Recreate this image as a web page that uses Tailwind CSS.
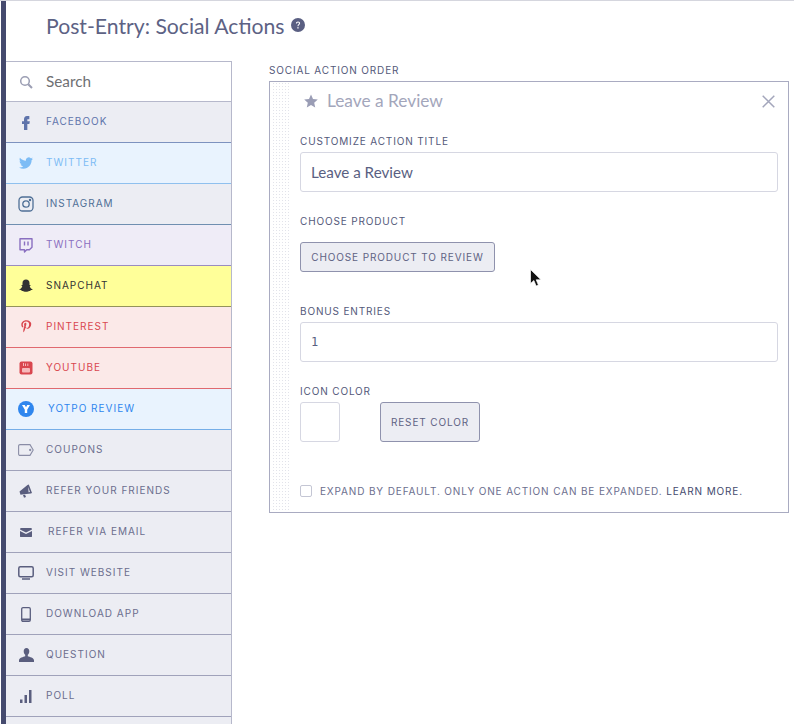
<!DOCTYPE html>
<html lang="en">

<head>
    <meta charset="UTF-8">
    <title>Post-Entry: Social Actions</title>
    <script src="https://cdn.jsdelivr.net/npm/@tailwindcss/browser@4"></script>
</head>

<body class="bg-white font-['Inter',sans-serif]">
    <div class="relative h-[724px] w-[794px] overflow-hidden border-t border-[#d5d6de]">
        <div class="ml-px flex h-full border-l-[5px] border-[#454a6e]">
            <div class="flex-1">
                <!-- header -->
                <div class="flex h-[60px] items-start pl-10 pt-[13px]">
                    <h1 class="font-['Lato',sans-serif] text-[21.2px] leading-[24px] text-[#5d6284]">Post-Entry: Social Actions</h1>
                    <svg class="ml-[6px] mt-[4px] h-[14px] w-[14px]" viewBox="0 0 14 14">
                        <circle cx="7" cy="7" r="7" fill="#5a5f82" />
                        <path d="M4.900 5.400C5 4.200 5.900 3.500 7 3.500c1.200 0 2.100.7 2.100 1.800 0 1.600-1.700 1.600-1.700 3H6.500c0-2 1.500-2 1.500-3 0-.5-.4-.9-1-.9s-1 .4-1.100 1z" fill="#fff" />
                        <rect x="6.300" y="9.200" width="1.300" height="1.300" fill="#fff" />
                    </svg>
                </div>

                <div class="flex">
                    <!-- sidebar -->
                    <div class="w-[226px] shrink-0 border-r border-[#b6b8cb]">
                        <div class="flex h-[41px] items-center border-y border-[#b6b8cb] bg-white">
                            <svg class="ml-[13px] h-[14px] w-[14px]" viewBox="0 0 14 14" fill="none" stroke="#9b9eb3" stroke-width="1.500">
                                <circle cx="6" cy="6" r="4.300" />
                                <path d="M9.200 9.200L13 13" stroke-width="2" />
                            </svg>
                            <span class="ml-[13px] font-['Lato',sans-serif] text-[15.3px] text-[#6f7073]">Search</span>
                        </div>

                        <div class="flex h-[41px] items-center border-b border-[#7d92bf] bg-[#ecedf3] text-[#5f74ab]">
                            <span class="flex w-10 justify-center">
                                <svg class="h-4 w-4" viewBox="0 0 24 24" fill="currentColor"><path d="M14 8h3V3h-3.500C10.400 3 9 5 9 8v3H6v4h3v9h5v-9h3l.8-4H14V8.800C14 8.300 14.200 8 14 8z" /></svg>
                            </span>
                            <span class="pb-0.5 text-[10px] tracking-[1px]">FACEBOOK</span>
                        </div>
                        <div class="flex h-[41px] items-center border-b border-[#8fc0ee] bg-[#e9f3fe] text-[#7dbcf5]">
                            <span class="flex w-10 justify-center">
                                <svg class="h-[14px] w-[14px]" viewBox="0 0 24 24" fill="currentColor"><path d="M23.953 4.570a10 10 0 01-2.825.775 4.958 4.958 0 002.163-2.723c-.951.555-2.005.959-3.127 1.184a4.920 4.920 0 00-8.384 4.482C7.690 8.095 4.067 6.130 1.640 3.162a4.822 4.822 0 00-.666 2.475c0 1.710.870 3.213 2.188 4.096a4.904 4.904 0 01-2.228-.616v.060a4.923 4.923 0 003.946 4.827 4.996 4.996 0 01-2.212.085 4.936 4.936 0 004.604 3.417 9.867 9.867 0 01-6.102 2.105c-.390 0-.779-.023-1.170-.067a13.995 13.995 0 007.557 2.209c9.053 0 13.998-7.496 13.998-13.985 0-.210 0-.420-.015-.630A9.935 9.935 0 0024 4.590z" /></svg>
                            </span>
                            <span class="pb-0.5 text-[10px] tracking-[1px]">TWITTER</span>
                        </div>
                        <div class="flex h-[41px] items-center border-b border-[#6f8fb0] bg-[#ecedf3] text-[#4f6f96]">
                            <span class="flex w-10 justify-center">
                                <svg class="h-4 w-4" viewBox="0 0 16 16" fill="none" stroke="currentColor" stroke-width="1.300">
                                    <rect x="1" y="1" width="14" height="14" rx="3.500" />
                                    <circle cx="8" cy="8" r="3.200" />
                                    <circle cx="12" cy="4" r=".6" fill="currentColor" />
                                </svg>
                            </span>
                            <span class="pb-0.5 text-[10px] tracking-[1px]">INSTAGRAM</span>
                        </div>
                        <div class="flex h-[41px] items-center border-b border-[#9a8cc0] bg-[#efecf7] text-[#8a6fc0]">
                            <span class="flex w-10 justify-center">
                                <svg class="h-4 w-4" viewBox="0 0 16 16" fill="none" stroke="currentColor" stroke-width="1.400">
                                    <path d="M2 1.700h12v8.600l-2.600 2.400H8.700L6.500 15v-2.300H2z" stroke-linejoin="round" />
                                    <path d="M6.500 4.500v4M10 4.500v4" />
                                </svg>
                            </span>
                            <span class="pb-0.5 text-[10px] tracking-[1px]">TWITCH</span>
                        </div>
                        <div class="flex h-[41px] items-center border-b border-[#93935a] bg-[#ffff99] text-[#333333]">
                            <span class="flex w-10 justify-center">
                                <svg class="h-[14px] w-[14px]" viewBox="0 0 14 14" fill="currentColor"><path d="M7 .5c2.200 0 3.500 1.500 3.500 3.500v2l1.200.2c.2.400-.5.800-1 1 .3 1.600 1.800 2.700 3 3.100-.2.7-1.300.8-2 .9-.3.7-.6.8-1.300.7-.9-.1-1.500.9-3.400.9s-2.500-1-3.400-.9c-.7.1-1 0-1.300-.7-.7-.1-1.800-.2-2-.9 1.200-.4 2.700-1.500 3-3.100-.5-.2-1.200-.6-1-1L3.500 6V4C3.500 2 4.800.5 7 .5z" /></svg>
                            </span>
                            <span class="pb-0.5 text-[10px] tracking-[1px]">SNAPCHAT</span>
                        </div>
                        <div class="flex h-[41px] items-center border-b border-[#e0696f] bg-[#fbe9e8] text-[#d9474f]">
                            <span class="flex w-10 justify-center">
                                <svg class="h-4 w-4" viewBox="0 0 24 24" fill="currentColor"><path d="M12.500 2C7.500 2 5 5.400 5 8.500c0 1.900.7 3.500 2.200 4.100.3.1.5 0 .6-.3l.2-.9c.1-.3 0-.4-.2-.6-.4-.5-.7-1.200-.7-2.100 0-2.700 2-5.100 5.200-5.100 2.900 0 4.400 1.800 4.400 4.100 0 3.100-1.400 5.700-3.400 5.700-1.100 0-2-.9-1.700-2.100.3-1.400 1-2.900 1-3.900 0-.9-.5-1.600-1.400-1.600-1.100 0-2 1.200-2 2.700 0 1 .3 1.600.3 1.600l-1.400 5.700c-.4 1.700-.1 3.800 0 4 0 .1.2.2.3.1.1-.2 1.500-1.900 2-3.700l.8-3c.4.8 1.500 1.400 2.700 1.400 3.600 0 6-3.300 6-7.600C19.800 4.900 16.900 2 12.500 2z" /></svg>
                            </span>
                            <span class="pb-0.5 text-[10px] tracking-[1px]">PINTEREST</span>
                        </div>
                        <div class="flex h-[41px] items-center border-b border-[#e0696f] bg-[#fbe9e8] text-[#d9474f]">
                            <span class="flex w-10 justify-center">
                                <svg class="h-[14px] w-[14px]" viewBox="0 0 14 14">
                                    <rect width="13" height="13" x=".5" y=".5" rx="2" fill="currentColor" />
                                    <rect x="3" y="7" width="8" height="4.500" rx="1" fill="#f6b9bb" />
                                    <path d="M4.500 2v3M6.500 2.500v2.500M8.800 2.500v2.500" stroke="#f6b9bb" stroke-width="1" />
                                </svg>
                            </span>
                            <span class="pb-0.5 text-[10px] tracking-[1px]">YOUTUBE</span>
                        </div>
                        <div class="flex h-[41px] items-center border-b border-[#75aee8] bg-[#e9f3fe] text-[#2f86ee]">
                            <span class="flex w-[42px] justify-center pr-[3px]">
                                <svg class="h-4 w-4" viewBox="0 0 16 16">
                                    <circle cx="8" cy="8" r="8" fill="currentColor" />
                                    <path d="M4 4h2.800L8 6.200 9.200 4H12L9.200 8.700V12H6.800V8.700z" fill="#fff" />
                                </svg>
                            </span>
                            <span class="pb-0.5 text-[10px] tracking-[1px]">YOTPO REVIEW</span>
                        </div>
                        <div class="flex h-[41px] items-center border-b border-[#a0a2ba] bg-[#ecedf3] text-[#6b6e8e]">
                            <span class="flex w-10 justify-center">
                                <svg class="h-3 w-4" viewBox="0 0 16 12" fill="none" stroke="#8a8da6" stroke-width="1.100">
                                    <path d="M2 .6h10l3.200 5.400L12 11.400H2c-.8 0-1.400-.6-1.400-1.400V2C.6 1.200 1.200.6 2 .6z" />
                                    <circle cx="12.200" cy="6" r=".6" fill="#8a8da6" />
                                </svg>
                            </span>
                            <span class="pb-0.5 text-[10px] tracking-[1px]">COUPONS</span>
                        </div>
                        <div class="flex h-[41px] items-center border-b border-[#a0a2ba] bg-[#ecedf3] text-[#6b6e8e]">
                            <span class="flex w-10 justify-center">
                                <svg class="h-[14px] w-[14px]" viewBox="0 0 14 14" fill="#5a5e7e">
                                    <path d="M.5 7.500L8.500 1l1.300-.5L13 9l-1.200.5-8.800 1-1.500.3z" />
                                    <path d="M4 11l2-.3 1 2.300-2 .7z" />
                                    <path d="M9.200 3l1.800 5-1.400.2z" fill="#ecedf3" />
                                </svg>
                            </span>
                            <span class="pb-0.5 text-[10px] tracking-[1px]">REFER YOUR FRIENDS</span>
                        </div>
                        <div class="flex h-[41px] items-center border-b border-[#a0a2ba] bg-[#ecedf3] text-[#6b6e8e]">
                            <span class="flex w-[42px] justify-center pr-[3px]">
                                <svg class="h-[9px] w-3" viewBox="0 0 12 9" fill="#5a5e7e">
                                    <path d="M.5 0h11l.5 1.500L6 4.500 0 1.500z" />
                                    <path d="M0 3L6 6 12 3v5.500c0 .3-.2.5-.5.5H.5C.2 9 0 8.800 0 8.500z" />
                                </svg>
                            </span>
                            <span class="pb-0.5 text-[10px] tracking-[1px]">REFER VIA EMAIL</span>
                        </div>
                        <div class="flex h-[41px] items-center border-b border-[#a0a2ba] bg-[#ecedf3] text-[#6b6e8e]">
                            <span class="flex w-10 justify-center">
                                <svg class="h-[14px] w-4" viewBox="0 0 16 14" fill="none" stroke="#5a5e7e">
                                    <rect x=".8" y=".8" width="14.400" height="10" rx="1.500" stroke-width="1.500" />
                                    <path d="M4 13h8" stroke-width="1.500" />
                                </svg>
                            </span>
                            <span class="pb-0.5 text-[10px] tracking-[1px]">VISIT WEBSITE</span>
                        </div>
                        <div class="flex h-[41px] items-center border-b border-[#a0a2ba] bg-[#ecedf3] text-[#6b6e8e]">
                            <span class="flex w-10 justify-center">
                                <svg class="h-[15px] w-[10px]" viewBox="0 0 10 15" fill="none" stroke="#5a5e7e">
                                    <rect x=".7" y=".7" width="8.600" height="13.600" rx="1.300" stroke-width="1.300" />
                                    <path d="M1 12.500h8" stroke-width="2" />
                                </svg>
                            </span>
                            <span class="pb-0.5 text-[10px] tracking-[1px]">DOWNLOAD APP</span>
                        </div>
                        <div class="flex h-[41px] items-center border-b border-[#a0a2ba] bg-[#ecedf3] text-[#6b6e8e]">
                            <span class="flex w-10 justify-center">
                                <svg class="h-[14px] w-[15px]" viewBox="0 0 15 14" fill="#5a5e7e"><path d="M7.500 0C9.300 0 10.300 1.300 10.300 3.200c0 1.600-.8 3-1.500 3.600v1.500c1.800.7 6.200 1.500 6.200 4V14H0v-1.700c0-2.500 4.400-3.300 6.200-4V6.800c-.7-.6-1.500-2-1.500-3.600C4.700 1.300 5.700 0 7.500 0z" /></svg>
                            </span>
                            <span class="pb-0.5 text-[10px] tracking-[1px]">QUESTION</span>
                        </div>
                        <div class="flex h-[41px] items-center border-b border-[#a0a2ba] bg-[#ecedf3] text-[#6b6e8e]">
                            <span class="flex w-10 justify-center">
                                <svg class="h-[13px] w-3" viewBox="0 0 12 13" fill="#5a5e7e">
                                    <rect x="0" y="9.500" width="2.500" height="3.500" />
                                    <rect x="4.500" y="5" width="2.500" height="8" />
                                    <rect x="9" y="0" width="2.500" height="13" />
                                </svg>
                            </span>
                            <span class="pb-0.5 text-[10px] tracking-[1px]">POLL</span>
                        </div>
                        <div class="h-[41px] bg-[#ecedf3]"></div>
                    </div>

                    <!-- social action order -->
                    <div class="ml-[37px] w-[520px] shrink-0">
                        <div class="mb-[5px] mt-[3px] text-[10px] leading-[12px] tracking-[0.85px] text-[#54597a]">SOCIAL ACTION ORDER</div>
                        <div class="flex h-[432px] border border-[#a9abc1]">
                            <div class="ml-[2px] w-[19px] shrink-0 bg-[radial-gradient(#e2e3ea_1px,transparent_1px)] bg-[length:3px_3px]"></div>
                            <div class="flex-1 pl-[9px] pr-[10px]">
                                <div class="flex h-[38px] items-center">
                                    <svg class="ml-1 h-[14px] w-[14px]" viewBox="0 0 14 14" fill="#9a9db5"><path d="M7 .5l2 4.500 4.800.5-3.600 3.200 1 4.800L7 11l-4.200 2.500 1-4.800L.2 5.500 5 5z" /></svg>
                                    <span class="ml-[9px] font-['Lato',sans-serif] text-[17.3px] text-[#a3a6bb]">Leave a Review</span>
                                    <svg class="ml-auto mr-[3px] h-[13px] w-[13px]" viewBox="0 0 13 13" stroke="#a3a6bb" stroke-width="1.500"><path d="M.7.7l11.600 11.600M12.300.7L.7 12.300" /></svg>
                                </div>

                                <div class="mt-[15px] text-[10px] leading-[12px] tracking-[0.85px] text-[#54597a]">CUSTOMIZE ACTION TITLE</div>
                                <div class="mt-[5px] flex h-10 items-center rounded-[3px] border border-[#d6d7e2] pl-[10px] font-['Lato',sans-serif] text-[15.2px] text-[#5a5f82]">Leave a Review</div>

                                <div class="mt-[23px] text-[10px] leading-[12px] tracking-[0.85px] text-[#54597a]">CHOOSE PRODUCT</div>
                                <div class="mt-[15px] flex h-[30px] w-[195px] items-center justify-center rounded-[3px] border border-[#8f92ad] bg-[#ecedf3] text-[10px] tracking-[0.87px] text-[#5f6384]">CHOOSE PRODUCT TO REVIEW</div>

                                <div class="mt-[33px] text-[10px] leading-[12px] tracking-[0.85px] text-[#54597a]">BONUS ENTRIES</div>
                                <div class="mt-[5px] flex h-10 items-center rounded-[3px] border border-[#d6d7e2] pl-[10px] font-['DejaVu_Sans_Mono',monospace] text-[12px] text-[#5a5f82]">1</div>

                                <div class="mt-[23px] text-[10px] leading-[12px] tracking-[0.85px] text-[#54597a]">ICON COLOR</div>
                                <div class="mt-[5px] flex">
                                    <div class="h-10 w-10 rounded-[3px] border border-[#d6d7e2]"></div>
                                    <div class="ml-10 flex h-10 w-[100px] items-center justify-center rounded-[3px] border border-[#8f92ad] bg-[#ecedf3] text-[10px] tracking-[0.87px] text-[#5f6384]">RESET COLOR</div>
                                </div>

                                <div class="mt-[43px] flex items-center">
                                    <span class="h-3 w-3 rounded-[2px] border border-[#c4c6d4]"></span>
                                    <span class="ml-2 text-[10px] leading-[12px] tracking-[0.86px] text-[#6b6e8e]">EXPAND BY DEFAULT. ONLY ONE ACTION CAN BE EXPANDED. <span class="text-[#454a6e]">LEARN MORE.</span></span>
                                </div>
                            </div>
                        </div>
                    </div>
                </div>
            </div>
        </div>

        <!-- mouse pointer -->
        <svg class="absolute left-[530px] top-[268px] h-[19px] w-3" viewBox="0 0 12 19">
            <path d="M.5.5v14l3.400-3 2.200 5.500 2.300-1-2.200-5.200h4.800z" fill="#111" stroke="#fff" stroke-width=".7" />
        </svg>
    </div>
</body>

</html>
